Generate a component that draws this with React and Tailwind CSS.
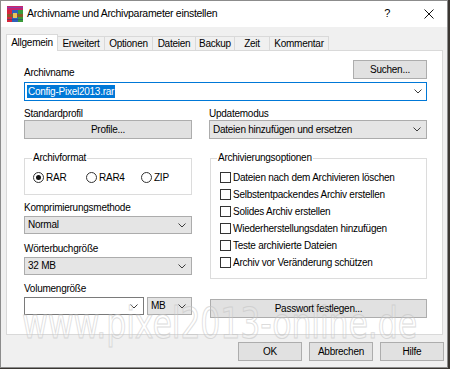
import React from "react";

const F = { fontFamily: '"Liberation Sans", Arial, sans-serif' };

function Chevron() {
  return (
    <svg width="8" height="5" viewBox="0 0 8 5" className="shrink-0">
      <path d="M0.5 0.5 L4 4 L7.5 0.5" fill="none" stroke="#3c3c3c" strokeWidth="1" />
    </svg>
  );
}

function Combo({ text, white, className = "" }) {
  return (
    <div
      className={`h-[18px] flex items-center justify-between pl-[3px] pr-[5px] border ${
        white ? "bg-white border-[#7a7a7a]" : "bg-[#e5e5e5] border-[#acacac]"
      } ${className}`}
    >
      <span className="leading-none">{text}</span>
      <Chevron />
    </div>
  );
}

function Btn({ children, className = "" }) {
  return (
    <div
      className={`h-[19px] flex items-center justify-center bg-[#e1e1e1] border border-[#adadad] ${className}`}
    >
      {children}
    </div>
  );
}

function Label({ children }) {
  return <div className="h-[12px] leading-[12px]">{children}</div>;
}

function Radio({ checked, label, w }) {
  return (
    <div className={`flex items-center gap-[2px] ${w}`}>
      <div className="w-[11px] h-[11px] rounded-full border border-[#333] bg-white flex items-center justify-center">
        {checked && <div className="w-[5px] h-[5px] rounded-full bg-[#111]" />}
      </div>
      <span>{label}</span>
    </div>
  );
}

function Check({ label }) {
  return (
    <div className="h-[17px] flex items-center gap-[2px]">
      <div className="w-[11px] h-[11px] border border-[#333] bg-white" />
      <span>{label}</span>
    </div>
  );
}

function WinRarIcon() {
  return (
    <svg width="16" height="16" viewBox="0 0 16 16">
      <rect x="0" y="0" width="16" height="4" fill="#c8246e" />
      <rect x="0" y="1" width="16" height="1" fill="#8a3fa8" />
      <rect x="0" y="4" width="5" height="12" fill="#d7263b" />
      <rect x="5" y="4" width="6" height="12" fill="#2f5fb8" />
      <rect x="11" y="4" width="5" height="12" fill="#3a9a3a" />
      <rect x="0" y="8" width="16" height="3" fill="#8a5a2b" />
      <rect x="6" y="7" width="4" height="5" fill="#e8c35a" />
      <rect x="0" y="13" width="16" height="1" fill="#1e3f80" opacity="0.5" />
    </svg>
  );
}

const tabs = [
  ["Erweitert", "w-[47px]"],
  ["Optionen", "w-[48px]"],
  ["Dateien", "w-[43px]"],
  ["Backup", "w-[39px]"],
  ["Zeit", "w-[35px]"],
  ["Kommentar", "w-[59px]"],
];

export default function App() {
  return (
    <div
      className="relative w-[450px] h-[369px] bg-[#3a3632] overflow-hidden text-[10px] tracking-[-0.25px] text-black"
      style={F}
    >
      <div className="w-[448px] h-[368px] border border-[#8c8c8c] bg-[#f0f0f0] flex flex-col">
        {/* title bar */}
        <div className="h-[26px] bg-white flex items-center shrink-0">
          <div className="ml-[6px] mt-[-1px]">
            <WinRarIcon />
          </div>
          <div className="ml-[4px] text-[10.5px] tracking-[-0.3px] mt-[-1px]">
            Archivname und Archivparameter einstellen
          </div>
          <div className="ml-auto text-[11px] mr-[34px] mt-[-1px]">?</div>
          <svg width="10" height="10" viewBox="0 0 10 10" className="mr-[13px] mt-[-1px]">
            <path d="M0.5 0.5 L9.5 9.5 M9.5 0.5 L0.5 9.5" stroke="#111" strokeWidth="1" />
          </svg>
        </div>

        {/* tabs */}
        <div className="flex items-end pl-[5px] mt-[6px] h-[17px]">
          <div className="w-[52px] h-[17px] bg-white border border-b-0 border-[#d9d9d9] flex items-center justify-center relative z-10 mb-[-1px] pb-[1px]">
            Allgemein
          </div>
          {tabs.map(([t, w]) => (
            <div
              key={t}
              className={`${w} h-[14px] border border-l-0 border-b-0 border-[#d9d9d9] flex items-center justify-center`}
            >
              {t}
            </div>
          ))}
        </div>

        {/* panel */}
        <div className="ml-[5px] w-[437px] h-[285px] bg-white border border-[#d9d9d9] pt-[9px] pl-[17px] pr-[15px] flex flex-col">
          <div className="h-[19px] flex items-end justify-between">
            <Label>Archivname</Label>
            <Btn className="w-[74px]">Suchen...</Btn>
          </div>
          <div className="mt-[3px] h-[19px] border border-[#0078d7] bg-white flex items-center justify-between pl-[2px] pr-[4px]">
            <span className="bg-[#0078d7] text-white leading-[13px] px-[1px]">Config-Pixel2013.rar</span>
            <Chevron />
          </div>

          <div className="flex gap-[17px] mt-[7px]">
            {/* left column */}
            <div className="w-[168px] flex flex-col">
              <Label>Standardprofil</Label>
              <Btn>Profile...</Btn>

              <div className="relative mt-[19px] h-[37px] border border-[#dcdcdc] flex items-center pl-[8px] pt-[1px]">
                <div className="absolute left-[7px] top-[-7px] bg-white px-[1px] leading-[12px]">
                  Archivformat
                </div>
                <Radio checked label="RAR" w="w-[53px]" />
                <Radio label="RAR4" w="w-[55px]" />
                <Radio label="ZIP" w="" />
              </div>

              <div className="mt-[7px]">
                <Label>Komprimierungsmethode</Label>
              </div>
              <Combo text="Normal" className="mt-[2px]" />

              <div className="mt-[9px]">
                <Label>Wörterbuchgröße</Label>
              </div>
              <Combo text="32 MB" className="mt-[2px]" />

              <div className="mt-[8px]">
                <Label>Volumengröße</Label>
              </div>
              <div className="flex gap-[3px] mt-[2px]">
                <Combo text="" white className="w-[120px]" />
                <Combo text="MB" className="flex-1" />
              </div>
            </div>

            {/* right column */}
            <div className="w-[218px] flex flex-col">
              <Label>Updatemodus</Label>
              <Combo text="Dateien hinzufügen und ersetzen" className="h-[19px]" />

              <div className="relative mt-[19px] border border-[#dcdcdc] pt-[10px] pb-[7px] pl-[9px] ml-[1px]">
                <div className="absolute left-[6px] top-[-7px] bg-white px-[1px] leading-[12px]">
                  Archivierungsoptionen
                </div>
                <Check label="Dateien nach dem Archivieren löschen" />
                <Check label="Selbstentpackendes Archiv erstellen" />
                <Check label="Solides Archiv erstellen" />
                <Check label="Wiederherstellungsdaten hinzufügen" />
                <Check label="Teste archivierte Dateien" />
                <Check label="Archiv vor Veränderung schützen" />
              </div>

              <Btn className="mt-[20px] ml-[1px] h-[18px]">Passwort festlegen...</Btn>
            </div>
          </div>
        </div>

        {/* bottom buttons */}
        <div className="flex justify-end gap-[7px] pr-[3px] mt-[7px]">
          <Btn className="w-[64px] border-[#0078d7]">OK</Btn>
          <Btn className="w-[64px]">Abbrechen</Btn>
          <Btn className="w-[64px]">Hilfe</Btn>
        </div>
      </div>

      {/* watermark overlay */}
      <svg
        className="absolute left-0 top-0 pointer-events-none"
        width="450"
        height="369"
        viewBox="0 0 450 369"
      >
        <text
          x="22"
          y="338"
          textLength="395"
          lengthAdjust="spacingAndGlyphs"
          fontSize="43"
          fontFamily="'DejaVu Sans', sans-serif"
          fill="rgba(255,255,255,0.2)"
          stroke="#c6c6c6"
          strokeWidth="1"
          opacity="0.6"
        >
          www.pixel2013-online.de
        </text>
      </svg>
    </div>
  );
}
